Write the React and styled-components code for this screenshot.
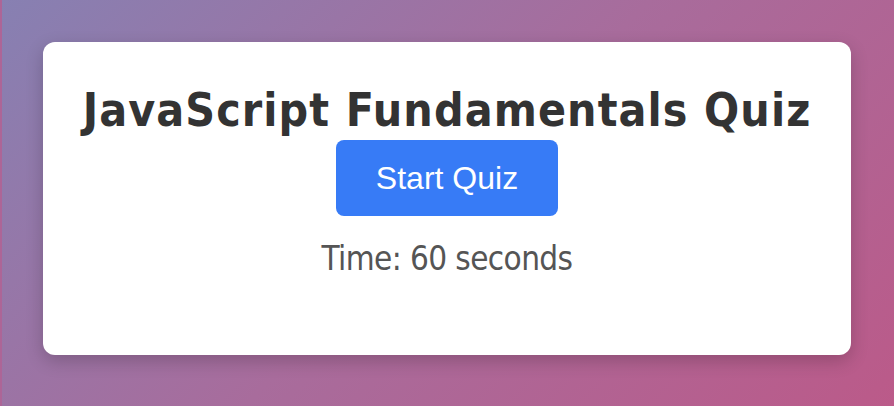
import React from "react";
import styled, { createGlobalStyle } from "styled-components";

const GlobalStyle = createGlobalStyle`
  html, body {
    margin: 0;
    padding: 0;
  }
  body {
    width: 894px;
    height: 406px;
    overflow: hidden;
    background: linear-gradient(135deg, #8780b2 0%, #a86c9c 50%, #bb5a89 100%);
  }
`;

const Page = styled.div`
  box-sizing: border-box;
  width: 894px;
  height: 406px;
  padding: 42px 43px 51px 41px;
  border-left: 2px solid #ad6597;
  display: flex;
`;

const Card = styled.div`
  flex: 1;
  background: #ffffff;
  border-radius: 12px;
  box-shadow: 0 6px 18px rgba(0, 0, 0, 0.2);
  display: flex;
  flex-direction: column;
  align-items: center;
  padding-top: 39px;
`;

const Title = styled.h1`
  margin: 0;
  font-family: "DejaVu Sans Condensed", "DejaVu Sans", Tahoma, sans-serif;
  font-weight: bold;
  font-size: 46px;
  line-height: 59px;
  letter-spacing: 1.1px;
  white-space: nowrap;
  color: #333333;
`;

const StartButton = styled.button`
  box-sizing: border-box;
  width: 222px;
  height: 76px;
  border: none;
  border-radius: 8px;
  background: #377bf6;
  color: #ffffff;
  font-family: "Liberation Sans", Arial, sans-serif;
  font-size: 32px;
  cursor: pointer;
`;

const Timer = styled.p`
  margin: 23px 0 0;
  font-family: "DejaVu Sans Condensed", "DejaVu Sans", Tahoma, sans-serif;
  font-size: 33px;
  line-height: normal;
  letter-spacing: -0.6px;
  color: #555555;
`;

export default function App() {
  return (
    <>
      <GlobalStyle />
      <Page>
        <Card>
          <Title>JavaScript Fundamentals Quiz</Title>
          <StartButton>Start Quiz</StartButton>
          <Timer>Time: 60 seconds</Timer>
        </Card>
      </Page>
    </>
  );
}
